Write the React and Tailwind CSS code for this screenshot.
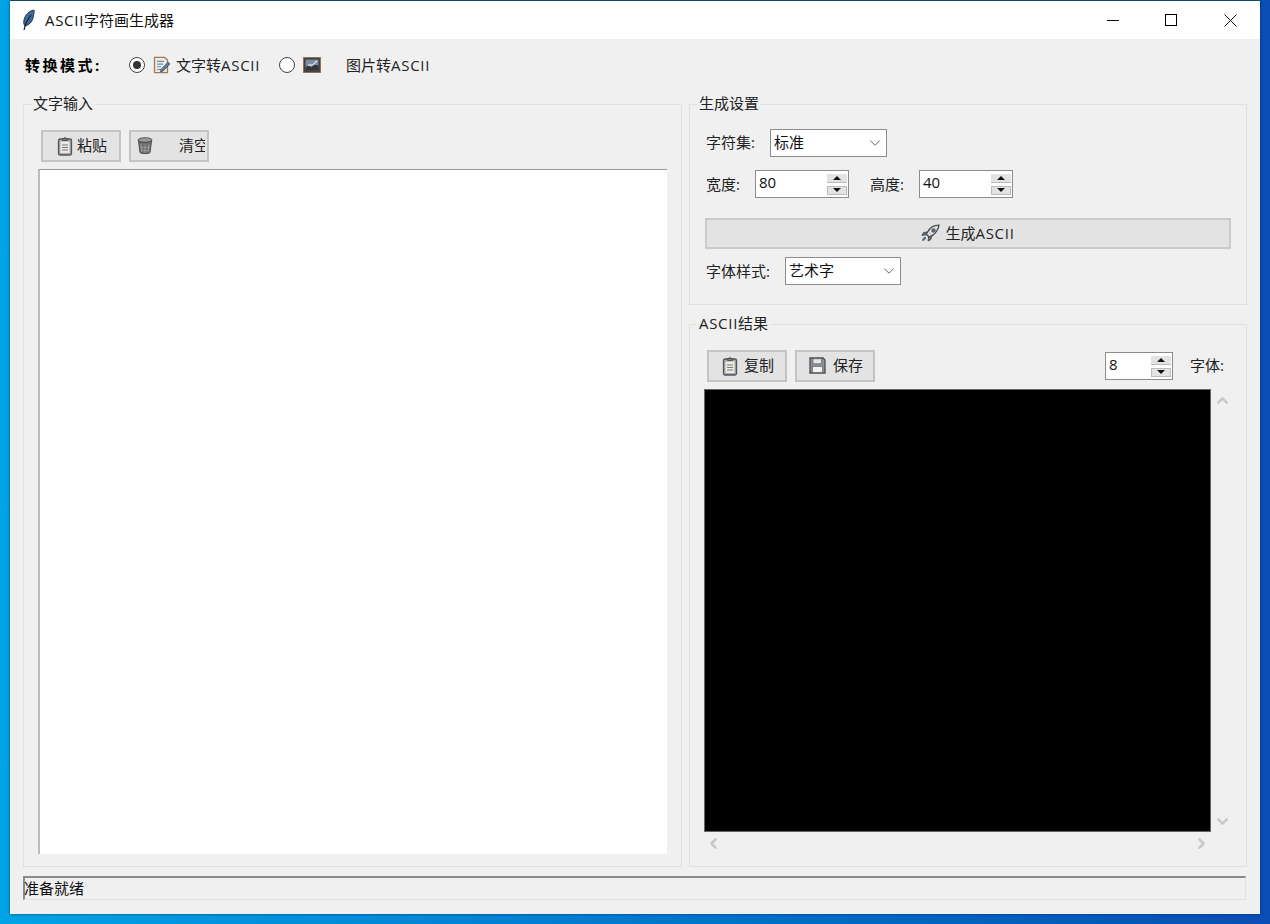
import React from "react";
import { ChevronDown, ChevronLeft, ChevronRight, ChevronUp } from "lucide-react";

const FeatherIcon = () => (
  <svg width="16" height="22" viewBox="0 0 16 22">
    <path d="M13 1C8 2 4 6 3 11c-.5 3 0 5 1 6 4-1 7-4 8-8 .5-3 1.500-6 1-8z" fill="#3f6c9e" stroke="#1f2f45" strokeWidth="1" />
    <path d="M10 6 5 14 3 21" fill="none" stroke="#15202e" strokeWidth="1.200" />
  </svg>
);

const MemoIcon = () => (
  <svg width="18" height="18" viewBox="0 0 18 20" preserveAspectRatio="none">
    <path d="M1.500 1.500h10l3 3v14h-13z" fill="#e9ecef" stroke="#a8794c" strokeWidth="1.300" />
    <path d="M4 6h7M4 9h6M4 12h4M4 15h4" stroke="#7c8a96" strokeWidth="1.200" />
    <path d="m8 15 7-8 2 1.800-7 8-2.500.7z" fill="#5f7f99" stroke="#33475a" strokeWidth=".8" />
  </svg>
);

const PictureIcon = () => (
  <svg width="18" height="16" viewBox="0 0 18 16">
    <rect x=".7" y=".7" width="16.600" height="14.600" fill="#2c2f36" stroke="#8a6a50" strokeWidth="1.200" />
    <rect x="2.500" y="2.500" width="13" height="11" fill="#7f8fa3" />
    <path d="M2.500 13.500v-3l3-3 3 3 2-3 5 1v5z" fill="#30343c" />
    <path d="M5 9c2-3 4 1 6-2s2-2 3-3" fill="none" stroke="#eceff2" strokeWidth="1.200" />
  </svg>
);

const ClipboardIcon = () => (
  <svg width="16" height="20" viewBox="0 0 16 20">
    <rect x="1.500" y="3" width="13" height="16" rx="1.500" fill="#a9a9a4" stroke="#50565c" strokeWidth="1.300" />
    <rect x="3.500" y="5.500" width="9" height="11.500" fill="#ecebe6" />
    <path d="M5 9h6M5 11.500h6M5 14h6" stroke="#777" strokeWidth="1" />
    <path d="M5.500 4.500V2.500h1.500a1 1 0 0 1 2 0h1.500v2z" fill="#70767c" stroke="#44494e" strokeWidth=".8" />
  </svg>
);

const TrashIcon = () => (
  <svg width="16" height="18" viewBox="0 0 16 18">
    <ellipse cx="8" cy="3" rx="7" ry="2.300" fill="#9b9b96" stroke="#55585a" strokeWidth="1" />
    <path d="M1.500 4 3 15.500C3.500 17 12.500 17 13 15.500L14.500 4C12 6 4 6 1.500 4z" fill="#6d6f70" stroke="#4b4d4e" strokeWidth="1" />
    <path d="M4 7l1 8M8 7.500V16M12 7l-1 8M3 10c3 1 7 1 10 0M3.500 13c3 1 6 1 9 0" stroke="#a5a29c" strokeWidth=".8" fill="none" />
  </svg>
);

const RocketIcon = () => (
  <svg width="19" height="18" viewBox="0 0 19 18">
    <path d="M18 1c-5 0-9 2.500-11.500 7L5 10l3.500 3.500L11 12c4-3 6.500-6.500 7-11z" fill="#d8d8d8" stroke="#3c3f42" strokeWidth="1.200" />
    <circle cx="12.500" cy="6.500" r="1.700" fill="#5a7896" stroke="#333" strokeWidth=".7" />
    <path d="M6.500 8 2.500 8.500 1 11.500 5 10.800zM10.500 11.500 10 15.500 7 17l.7-4z" fill="#6d7378" stroke="#3c3f42" strokeWidth=".8" />
    <path d="M4 13c-1.500.7-2.300 2-2.500 3.500C3 16.300 4.300 15.500 5 14z" fill="#54769a" stroke="#3c3f42" strokeWidth=".6" />
  </svg>
);

const SaveIcon = () => (
  <svg width="17" height="17" viewBox="0 0 17 17">
    <path d="M1 1h13l2 2v13H1z" fill="#8b9197" stroke="#4a4f55" strokeWidth="1.300" />
    <rect x="4" y="1.800" width="8.500" height="5" fill="#e5e5e5" stroke="#666" strokeWidth=".7" />
    <rect x="3.500" y="9.500" width="10" height="6" fill="#f1f1f1" stroke="#666" strokeWidth=".7" />
  </svg>
);

// latin runs are a little wider in the original font
const Ascii = () => <span className="tracking-[0.7px]">ASCII</span>;

// legend sits on top of the group border, like a ttk LabelFrame
const Group = ({ title, className, children }) => (
  <div className={`relative border border-[#e0e0e0] ${className}`}>
    <span className="absolute -top-[11px] left-[7px] bg-[#f0f0f0] px-[2px] leading-[18px] text-[#222]">
      {title}
    </span>
    {children}
  </div>
);

const ToolButton = ({ icon, children, className = "" }) => (
  <button className={`flex h-[32px] w-[80px] items-center overflow-hidden border-2 border-[#c4c4c4] bg-[#e3e3e3] pb-px text-[#222] ${className}`}>
    {icon}
    {children}
  </button>
);

const Combo = ({ value, width }) => (
  <div className={`flex h-[28px] items-center justify-between border border-[#8c8c8c] bg-white pb-px pl-[3px] pr-[2px] ${width}`}>
    <span className="text-[#111]">{value}</span>
    <ChevronDown size={18} strokeWidth={1.300} className="text-[#666]" />
  </div>
);

const Spin = ({ value, width }) => (
  <div className={`flex h-[28px] items-center justify-between border border-[#8c8c8c] bg-white pl-[3px] pr-[1px] ${width}`}>
    <span className="pb-[3px] text-[#111]">{value}</span>
    <div className="flex w-[20px] flex-col gap-[3px]">
      <div className="flex h-[9px] items-center justify-center border-b border-[#bbb] bg-[#e3e3e3]">
        <div className="h-0 w-0 border-x-[4px] border-b-[4px] border-x-transparent border-b-[#111]" />
      </div>
      <div className="flex h-[9px] items-center justify-center border border-[#bbb] bg-[#e3e3e3]">
        <div className="h-0 w-0 border-x-[4px] border-t-[4px] border-x-transparent border-t-[#111]" />
      </div>
    </div>
  </div>
);

export default function App() {
  return (
    <div className="h-[924px] w-[1270px] overflow-hidden bg-gradient-to-r from-[#00a3e6] to-[#0a4db5] pl-[10px] pt-px font-['Open_Sans','Noto_Sans_CJK_SC',sans-serif] text-[15px]">
      <div className="relative h-[913px] w-[1250px] bg-[#f0f0f0] shadow-[0_-1px_0_#0f4a70,0_0_3px_rgba(0,30,70,0.6)]">
        {/* title bar */}
        <div className="flex h-[38px] items-center bg-white">
          <div className="ml-[11px] flex w-[24px] justify-start">
            <FeatherIcon />
          </div>
          <span className="text-[#111]">
            <Ascii />字符画生成器
          </span>
          <div className="ml-auto flex items-center">
            <div className="flex w-[59px] justify-center">
              <div className="h-px w-[12px] bg-black" />
            </div>
            <div className="flex w-[59px] justify-center pr-[2px]">
              <div className="h-[12px] w-[12px] border border-black" />
            </div>
            <div className="flex w-[59px] justify-center pr-[1px]">
              <svg width="13" height="13" viewBox="0 0 13 13">
                <path d="M.5.5l12 12M12.500.5l-12 12" stroke="#111" strokeWidth="1" />
              </svg>
            </div>
          </div>
        </div>

        <div className="px-[13px]">
          {/* mode row */}
          <div className="mb-[13px] flex h-[52px] items-center text-[#222]">
            <span className="ml-[2px] w-[104px] font-bold tracking-[2.500px] text-black">转换模式:</span>
            <div className="flex h-[16px] w-[16px] items-center justify-center rounded-full border border-[#444] bg-white">
              <div className="h-[8px] w-[8px] rounded-full bg-[#333]" />
            </div>
            <div className="ml-[8px] w-[23px]">
              <MemoIcon />
            </div>
            <span>
              文字转<Ascii />
            </span>
            <div className="ml-[19px] h-[16px] w-[16px] rounded-full border border-[#444] bg-white" />
            <div className="ml-[8px] w-[43px]">
              <PictureIcon />
            </div>
            <span>
              图片转<Ascii />
            </span>
          </div>

          <div className="flex h-[763px] gap-[7px]">
            {/* text input */}
            <Group title="文字输入" className="w-[659px] pl-[14px] pt-[25px]">
              <div className="ml-[3px] flex gap-[8px]">
                <ToolButton icon={<ClipboardIcon />} className="pl-[14px]">
                  <span className="ml-[4px]">粘贴</span>
                </ToolButton>
                <ToolButton icon={<TrashIcon />} className="pl-[6px]">
                  <span className="ml-[26px] w-[26px] shrink-0 overflow-hidden whitespace-nowrap text-left">清空</span>
                </ToolButton>
              </div>
              <div className="mt-[7px] h-[685px] w-[629px] border-l-2 border-t border-l-[#bcbcbc] border-t-[#9a9a9a] bg-white" />
            </Group>

            {/* right column */}
            <div className="flex w-[558px] flex-col gap-[19px]">
              <Group title="生成设置" className="h-[201px] pl-[16px] pt-[24px] text-[#222]">
                <div className="flex items-center">
                  <span className="w-[64px] pb-px">字符集:</span>
                  <Combo value="标准" width="w-[117px]" />
                </div>
                <div className="mt-[13px] flex items-center">
                  <span className="w-[49px]">宽度:</span>
                  <Spin value="80" width="w-[94px]" />
                  <span className="ml-[21px] w-[49px]">高度:</span>
                  <Spin value="40" width="w-[94px]" />
                </div>
                <button className="-ml-px mt-[20px] flex h-[31px] w-[526px] items-center justify-center gap-[5px] border-2 border-[#cacaca] bg-[#e3e3e3] pb-px">
                  <RocketIcon />
                  <span>
                    生成<Ascii />
                  </span>
                </button>
                <div className="mt-[8px] flex items-center">
                  <span className="w-[79px]">字体样式:</span>
                  <Combo value="艺术字" width="w-[116px]" />
                </div>
              </Group>

              <Group
                title={
                  <>
                    <Ascii />结果
                  </>
                }
                className="flex-1 pl-[14px] pt-[25px]"
              >
                <div className="flex items-center">
                  <ToolButton icon={<ClipboardIcon />} className="ml-[3px] pl-[13px]">
                    <span className="ml-[6px]">复制</span>
                  </ToolButton>
                  <ToolButton icon={<SaveIcon />} className="ml-[8px] pl-[12px]">
                    <span className="ml-[7px]">保存</span>
                  </ToolButton>
                  <div className="ml-[230px]">
                    <Spin value="8" width="w-[68px]" />
                  </div>
                  <span className="ml-[17px] pb-px text-[#222]">字体:</span>
                </div>
                <div className="mt-[7px] flex h-[443px]">
                  <div className="h-full w-[507px] border border-[#666] bg-black" />
                  <div className="flex w-[22px] flex-col items-center justify-between pb-[2px] pt-[3px] text-[#c8c8c8]">
                    <ChevronUp size={17} strokeWidth={3.500} />
                    <ChevronDown size={17} strokeWidth={3.500} />
                  </div>
                </div>
                <div className="mt-[3px] flex w-[507px] justify-between px-px text-[#c8c8c8]">
                  <ChevronLeft size={17} strokeWidth={3.500} />
                  <ChevronRight size={17} strokeWidth={3.500} />
                </div>
              </Group>
            </div>
          </div>

          {/* status bar */}
          <div className="mt-[9px] flex h-[24px] w-[1223px] items-center border-b border-l-2 border-r border-t-2 border-b-[#e2e2e2] border-l-[#8a8a8a] border-r-[#e2e2e2] border-t-[#8a8a8a] text-[#111]">
            <span className="-ml-[1px]">准备就绪</span>
          </div>
        </div>
      </div>
    </div>
  );
}
